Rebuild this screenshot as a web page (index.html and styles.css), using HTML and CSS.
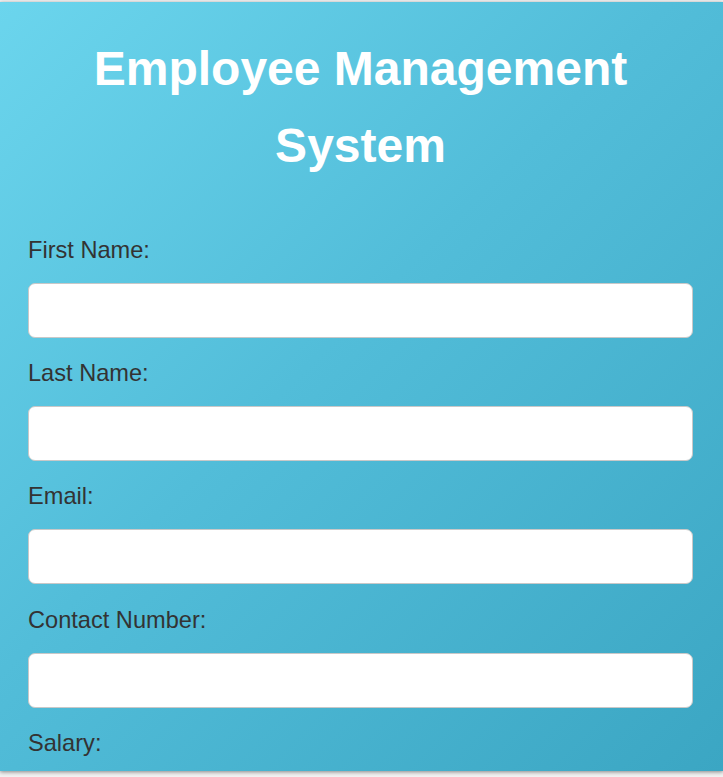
FILE: index.html
```html
<!DOCTYPE html>
<html>
<head>
<meta charset="utf-8">
<title>Employee Management System</title>
<link rel="stylesheet" href="styles.css">
</head>
<body>
<div class="page">
  <div class="container">
    <h1 class="title">Employee Management System</h1>
    <form class="form">
      <label class="label" for="fn">First Name:</label>
      <input class="field" id="fn" type="text">
      <label class="label" for="ln">Last Name:</label>
      <input class="field" id="ln" type="text">
      <label class="label" for="em">Email:</label>
      <input class="field" id="em" type="email">
      <label class="label" for="cn">Contact Number:</label>
      <input class="field" id="cn" type="text">
      <label class="label" for="sa">Salary:</label>
      <input class="field" id="sa" type="text">
    </form>
  </div>
  <p class="below">items</p>
</div>
</body>
</html>
```

FILE: styles.css
```css
html, body {
  margin: 0;
  padding: 0;
}
body {
  background: #f2f2f2;
  font-family: "Liberation Sans", Arial, sans-serif;
  overflow: hidden;
  height: 777px;
}
.page {
  padding-top: 2px;
}
.container {
  position: relative;
  z-index: 1;
  height: 769px;
  overflow: hidden;
  box-sizing: border-box;
  padding: 28px 30px 0 28px;
  background: linear-gradient(135deg, #6bd5ed 0%, #52bdd9 45%, #3ba6c3 100%);
  box-shadow: 0 1px 4px rgba(0, 0, 0, 0.45);
}
.title {
  margin: 0 0 53px;
  text-align: center;
  color: #ffffff;
  font-size: 48px;
  font-weight: bold;
  line-height: 77px;
}
.form {
  display: flex;
  flex-direction: column;
}
.label {
  display: block;
  color: #333333;
  font-size: 23.6px;
  line-height: 27px;
  margin-bottom: 19px;
}
.field {
  display: block;
  box-sizing: border-box;
  width: 100%;
  height: 55px;
  margin: 0 0 22.2px;
  border: 1px solid #c8c8c8;
  border-radius: 7px;
  background: #ffffff;
  font-size: 20px;
  padding: 0 12px;
}
.below {
  margin: -14px 0 0 6px;
  font-size: 16px;
  color: #333;
}
```
